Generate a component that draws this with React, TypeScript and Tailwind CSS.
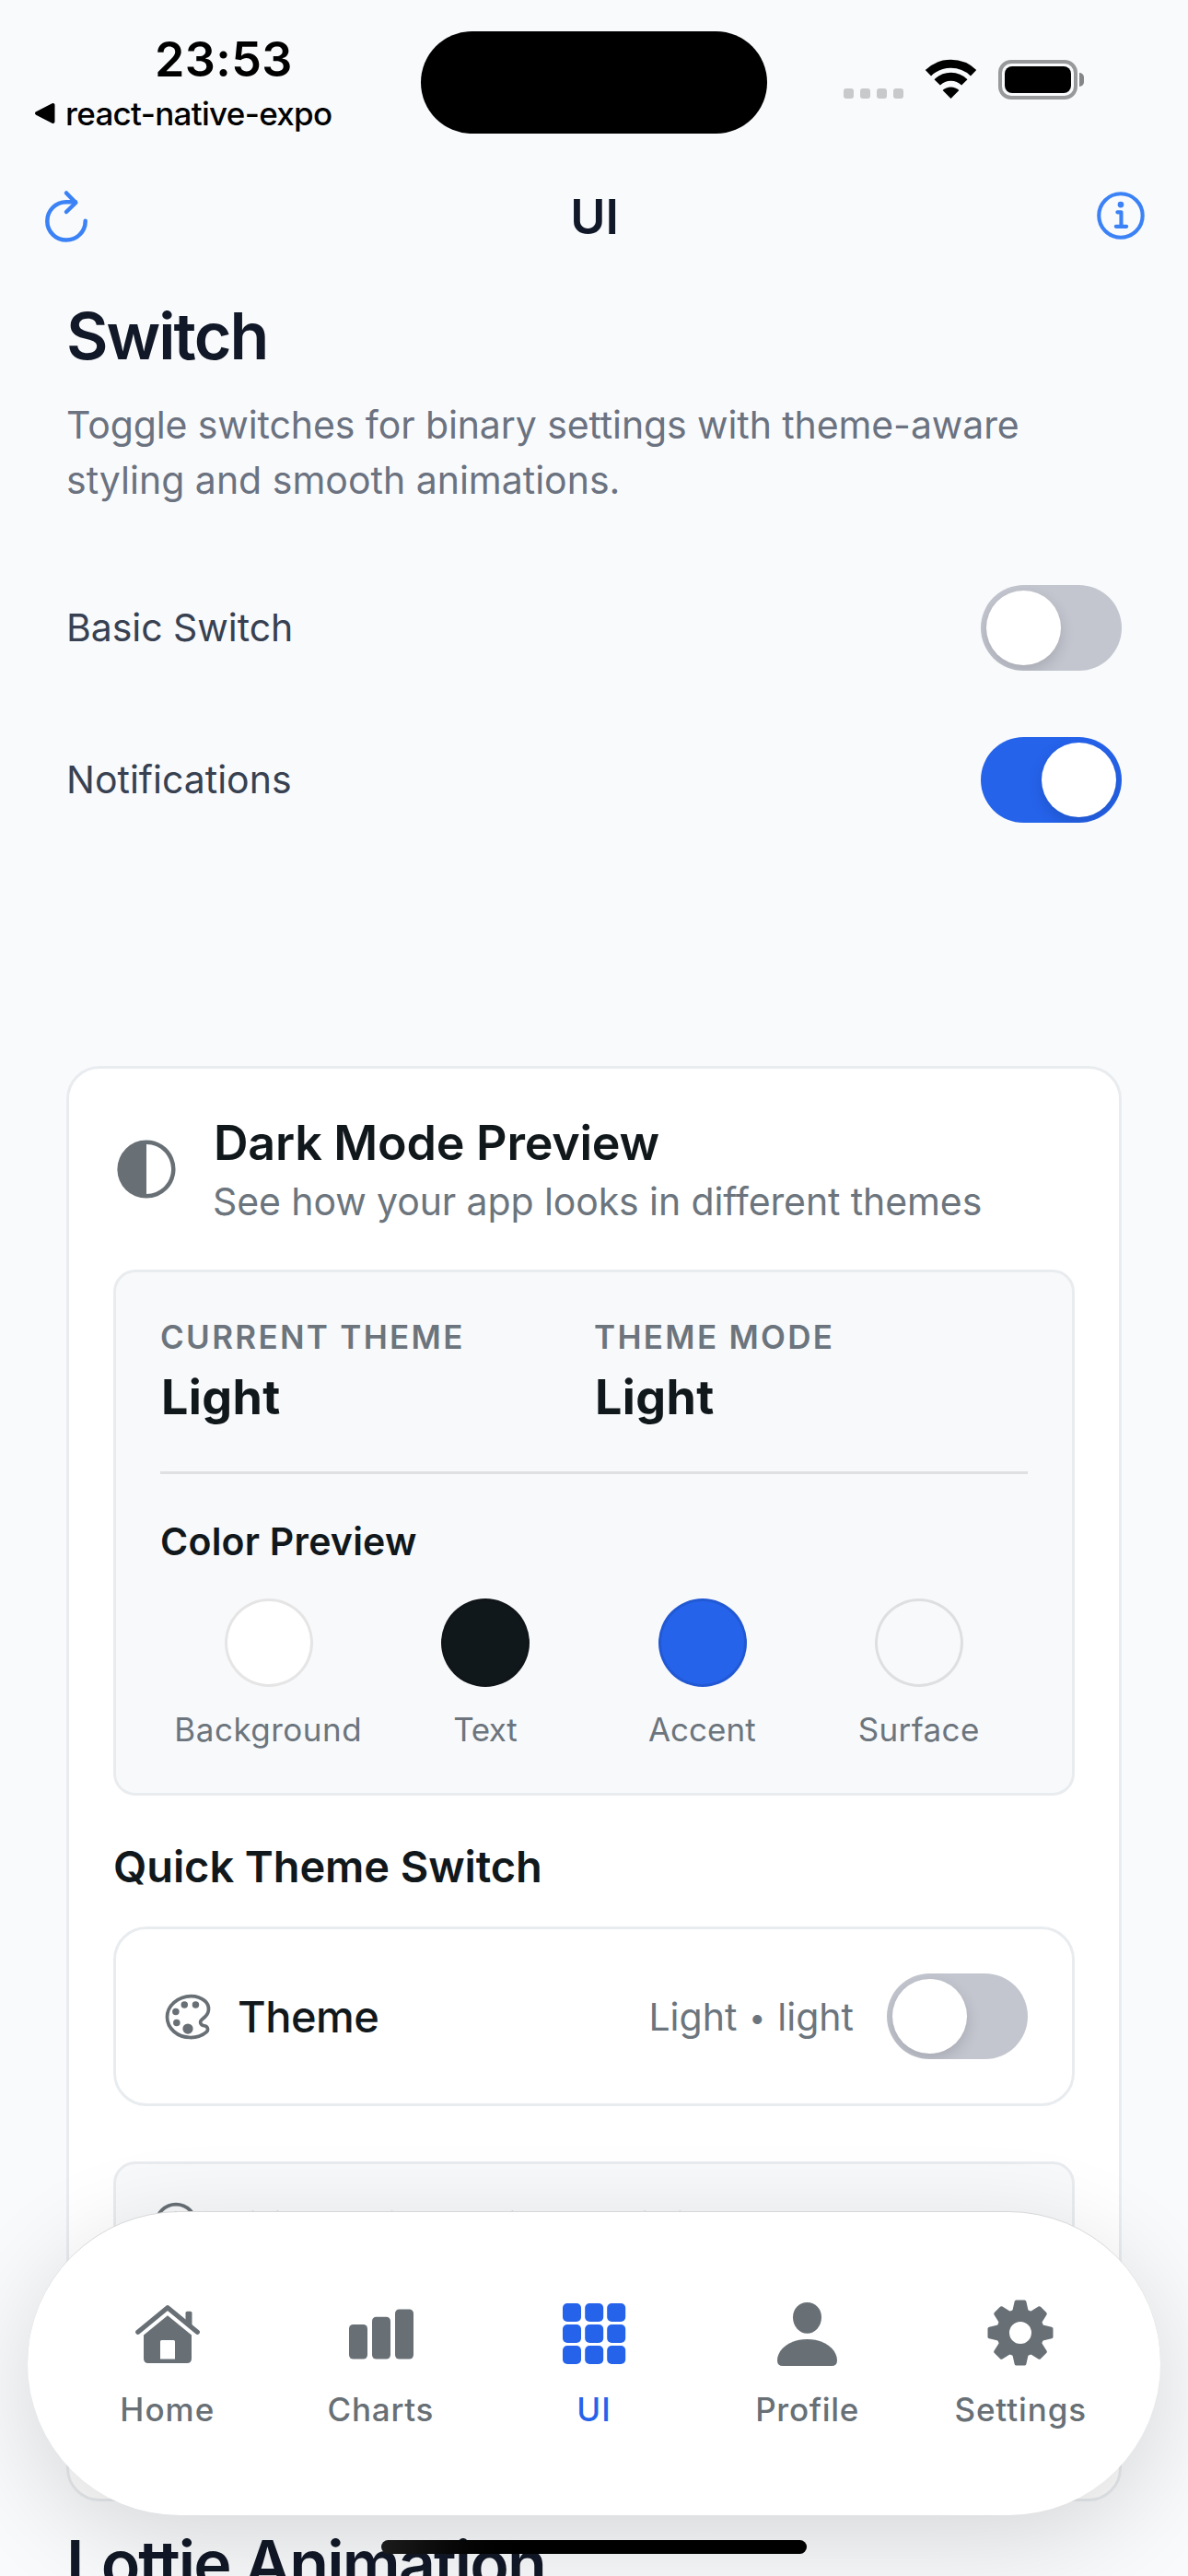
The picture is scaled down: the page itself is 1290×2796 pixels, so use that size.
import {
  IoColorPaletteOutline,
  IoContrast,
  IoInformationCircleOutline,
} from "react-icons/io5";

function StatusBar() {
  return (
    <div className="flex h-[177px] items-start text-black">
      <div className="w-[457px] pl-[37px] pt-[33px]">
        <div className="pl-[131px] text-[52px] font-semibold leading-[64px] tracking-[0.4px]">
          23:53
        </div>
        <div className="flex items-center pt-[6px]">
          <svg className="h-[24px] w-[24px]" viewBox="0 0 24 24">
            <path
              d="M3 12 20.500 3V21Z"
              fill="#000"
              stroke="#000"
              strokeWidth="4"
              strokeLinejoin="round"
            />
          </svg>
          <span className="ml-[10px] whitespace-nowrap text-[35px] font-medium leading-[40px] tracking-[-0.69px]">
            react-native-expo
          </span>
        </div>
      </div>
      <div className="mt-[33.500px] h-[111px] w-[376px] rounded-full bg-black" />
      <div className="ml-[83px] flex gap-[7px] pt-[96px]">
        {[0, 1, 2, 3].map((i) => (
          <div key={i} className="h-[11px] w-[11px] rounded-[3px] bg-[#c8c9cb]" />
        ))}
      </div>
      <svg className="ml-[23px] mt-[63px] h-[46px] w-[58px]" viewBox="0 0 58 46">
        <g fill="none" stroke="#000" strokeWidth="9">
          <path d="M3.900 16.200A35.500 35.500 0 0 1 53.100 16.200" />
          <path d="M13.700 26.400A20.800 20.800 0 0 1 43.300 26.400" />
        </g>
        <path d="M28.500 44 19.600 35A12.800 12.800 0 0 1 37.400 35Z" fill="#000" />
      </svg>
      <div className="ml-[22px] mt-[65px] flex h-[43px] w-[86px] items-center justify-center rounded-[14px] border-[4px] border-[#98999b]">
        <div className="h-[29px] w-[72px] shrink-0 rounded-[8px] bg-black" />
      </div>
      <div className="ml-[2px] mt-[79px] h-[15px] w-[5px] rounded-r-full bg-[#858688]" />
    </div>
  );
}

function Header() {
  return (
    <div className="flex h-[116px] items-center justify-between pl-[36px] pr-[39px]">
      <svg className="h-[66px] w-[66px]" viewBox="36 202 66 66">
        <g
          fill="none"
          stroke="#3b82f6"
          strokeWidth="4.500"
          strokeLinecap="round"
          strokeLinejoin="round"
        >
          <path d="M92.700 239.800A20.700 20.700 0 1 1 72 219.200H82" />
          <path d="M72 209.500 82.300 220 72 230" />
        </g>
      </svg>
      <h1 className="pl-[4px] pt-[1px] text-[52px] font-semibold leading-[60px] text-[#111827]">UI</h1>
      <IoInformationCircleOutline className="h-[66px] w-[66px] text-[#3b82f6]" />
    </div>
  );
}

function Switch({ on = false }: { on?: boolean }) {
  return (
    <div
      className={
        on
          ? "flex h-[93px] w-[153px] shrink-0 items-center justify-end overflow-hidden rounded-full bg-[#2563eb] px-[6px]"
          : "flex h-[93px] w-[153px] shrink-0 items-center justify-start overflow-hidden rounded-full bg-[#c3c6cf] px-[6px]"
      }
    >
      <div className="h-[81px] w-[81px] rounded-full bg-white shadow-[0_6px_16px_rgba(0,0,0,0.14)]" />
    </div>
  );
}

const swatches = [
  { name: "Background", fill: "bg-white", track: "tracking-[0.5px]" },
  { name: "Text", fill: "bg-[#11181c]", track: "tracking-[-0.4px]" },
  { name: "Accent", fill: "bg-[#2563eb]", track: "" },
  { name: "Surface", fill: "bg-[#f8f9fb]", track: "tracking-[0.4px]" },
];

function PreviewPanel() {
  return (
    <div className="mt-[44px] rounded-[24px] border-[3px] border-[#e9ecef] bg-[#f8f9fb] px-[48px] pb-[48px] pt-[48px]">
      <div className="grid grid-cols-2">
        {["CURRENT THEME", "THEME MODE"].map((label) => (
          <div key={label}>
            <div className="text-[35px] font-[560] leading-[44px] tracking-[2.3px] text-[#6c757d]">
              {label}
            </div>
            <div className="ml-[1px] mt-[12px] text-[52px] font-bold leading-[64px] tracking-[0.4px]">Light</div>
          </div>
        ))}
      </div>
      <div className="mt-[48px] h-[3px] bg-[#dfe0e2]" />
      <div className="mt-[48px] text-[41px] font-semibold leading-[50px] tracking-[0.23px]">
        Color Preview
      </div>
      <div className="mt-[37px] grid grid-cols-4">
        {swatches.map((s) => (
          <div key={s.name} className="flex flex-col items-center">
            <div className={`h-[96px] w-[96px] rounded-full border-[3px] border-black/10 ${s.fill}`} />
            <div className={`mt-[25px] pr-[1px] text-[35px] leading-[42px] text-[#6c757d] ${s.track}`}>{s.name}</div>
          </div>
        ))}
      </div>
    </div>
  );
}

function DarkModeCard() {
  return (
    <section className="mt-[264px] h-[1558px] rounded-[36px] border-[3px] border-[#e9ecef] bg-white px-[48px] pt-[48px] text-[#11181c]">
      <div className="flex items-center">
        <IoContrast className="mb-[4px] h-[72px] w-[72px] -scale-x-100 text-[#687076]" />
        <div className="ml-[36px]">
          <h3 className="pl-[1px] text-[52px] font-semibold leading-[66px] tracking-[-0.24px]">Dark Mode Preview</h3>
          <p className="text-[41px] leading-[60px] tracking-[-0.1px] text-[#6c757d]">
            See how your app looks in different themes
          </p>
        </div>
      </div>

      <PreviewPanel />

      <h4 className="mt-[48px] text-[47px] font-semibold leading-[58px] tracking-[-0.1px]">
        Quick Theme Switch
      </h4>
      <div className="mt-[36px] flex items-center rounded-[36px] border-[3px] border-[#e9ecef] p-[48px]">
        <IoColorPaletteOutline className="h-[60px] w-[60px] text-[#687076]" />
        <span className="ml-[24px] flex-1 text-[47px] font-medium leading-[58px] tracking-[-0.5px]">
          Theme
        </span>
        <span className="mr-[36px] flex items-center gap-[13px] text-[41px] leading-[50px] text-[#6c757d]">
          <span>Light</span>
          <span className="pt-[3px] text-[32px] leading-[40px]">•</span>
          <span>light</span>
        </span>
        <Switch />
      </div>

      <div className="mt-[60px] flex h-[240px] items-start rounded-[24px] border-[3px] border-[#e9ecef] bg-[#f8f9fb] p-[36px]">
        <IoInformationCircleOutline className="h-[60px] w-[60px] shrink-0 text-[#687076]" />
        <p className="ml-[24px] pt-[1px] text-[35px] leading-[54px] text-[#6c757d]">
          Visit Theming section to edit light styles
        </p>
      </div>
    </section>
  );
}

function HomeIcon() {
  return (
    <svg className="h-[72px] w-[72px]" viewBox="146 2496 72 72" fill="currentColor">
      <path
        d="M149.800 2531.300 182 2504.800 214.300 2531.300"
        fill="none"
        stroke="currentColor"
        strokeWidth="5.200"
        strokeLinecap="round"
        strokeLinejoin="round"
      />
      <path d="M201.500 2521V2510.500Q201.500 2508.700 203.300 2508.700H206.700Q208.500 2508.700 208.500 2510.500V2527Z" />
      <path
        fillRule="evenodd"
        d="M182 2513.300 208 2534.500V2560Q208 2565 203 2565H161Q156 2565 156 2560V2534.500ZM175.500 2540Q174 2540 174 2541.500V2560.500H190V2541.500Q190 2540 188.500 2540Z"
      />
    </svg>
  );
}

function ChartsIcon() {
  return (
    <svg className="h-[72px] w-[72px]" viewBox="377 2496 72 72" fill="currentColor">
      <rect x="379" y="2523" width="20" height="37.500" rx="4.500" />
      <rect x="404" y="2514.800" width="20" height="45.700" rx="4.500" />
      <rect x="429" y="2506.500" width="20" height="54" rx="4.500" />
    </svg>
  );
}

function GridIcon() {
  return (
    <svg className="h-[72px] w-[72px]" viewBox="609 2496 72 72" fill="currentColor">
      {[2500, 2523, 2546].map((y) =>
        [611, 635.2, 659.2].map((x) => (
          <rect key={`${x}-${y}`} x={x} y={y} width="20" height="20" rx="5" />
        )),
      )}
    </svg>
  );
}

function ProfileIcon() {
  return (
    <svg className="h-[72px] w-[72px]" viewBox="841 2496 72 72" fill="currentColor">
      <path d="M876.500 2499C885.500 2499 892 2506 892 2515.200C892 2525 885 2532.800 876.500 2532.800C868 2532.800 861 2525 861 2515.200C861 2506 867.500 2499 876.500 2499Z" />
      <path d="M844 2562C844 2551 856 2539 876.500 2539C897 2539 909 2551 909 2562Q909 2568 903 2568H850Q844 2568 844 2562Z" />
    </svg>
  );
}

function SettingsIcon() {
  return (
    <svg className="h-[72px] w-[72px]" viewBox="-36 -36 72 72">
      <circle r="19" fill="none" stroke="currentColor" strokeWidth="14" />
      {[0, 45, 90, 135, 180, 225, 270, 315].map((a) => (
        <path
          key={a}
          d="M-4.400-33.500H4.400L7-22H-7Z"
          transform={`rotate(${a})`}
          fill="currentColor"
          stroke="currentColor"
          strokeWidth="4"
          strokeLinejoin="round"
        />
      ))}
    </svg>
  );
}

const tabs = [
  { label: "Home", icon: <HomeIcon />, color: "text-[#687076]", track: "tracking-[1px]" },
  { label: "Charts", icon: <ChartsIcon />, color: "text-[#687076]", track: "tracking-[0.73px]" },
  { label: "UI", icon: <GridIcon />, color: "text-[#2563eb]", track: "tracking-[1px]" },
  { label: "Profile", icon: <ProfileIcon />, color: "text-[#687076]", track: "tracking-[0.67px]" },
  { label: "Settings", icon: <SettingsIcon />, color: "text-[#687076]", track: "tracking-[0.9px]" },
];

function TabBar() {
  return (
    <nav className="absolute left-[30px] top-[2400px] grid h-[330px] w-[1230px] grid-cols-5 rounded-full border-t border-[#d6d7d8] bg-white px-[36px] pt-[95px] shadow-[0_28px_110px_rgba(0,0,0,0.14)]">
      {tabs.map((t) => (
        <div key={t.label} className={`flex flex-col items-center ${t.color}`}>
          {t.icon}
          <span className={`mt-[26px] text-[35px] font-medium leading-[42px] ${t.track}`}>{t.label}</span>
        </div>
      ))}
    </nav>
  );
}

export default function App() {
  return (
    <div className="relative h-[2796px] w-[1290px] overflow-hidden bg-[#f9fafc] font-['Inter',sans-serif]">
      <StatusBar />
      <Header />
      <main className="px-[72px] pt-[30px]">
        <h2 className="text-[70px] font-semibold leading-[84px] tracking-[-2px] text-[#111827]">Switch</h2>
        <p className="mt-[24px] text-[41px] leading-[60px] tracking-[-0.1px] text-[#6b7280]">
          Toggle switches for binary settings with theme-aware
          <br />
          <span className="tracking-normal">styling and smooth animations.</span>
        </p>
        <div className="mt-[84px] flex items-center justify-between text-[41px] tracking-[-0.05px] text-[#374151]">
          <span>Basic Switch</span>
          <Switch />
        </div>
        <div className="mt-[72px] flex items-center justify-between text-[41px] text-[#374151]">
          <span>Notifications</span>
          <Switch on />
        </div>
        <DarkModeCard />
        <h2 className="mt-[26px] text-[70px] font-semibold leading-[84px] tracking-[-1.92px] text-[#111827]">
          Lottie Animation
        </h2>
      </main>
      <TabBar />
      <div className="absolute left-[414px] top-[2757px] h-[15px] w-[462px] rounded-full bg-linear-to-r from-[#1c1c1c] to-black to-40%" />
    </div>
  );
}
